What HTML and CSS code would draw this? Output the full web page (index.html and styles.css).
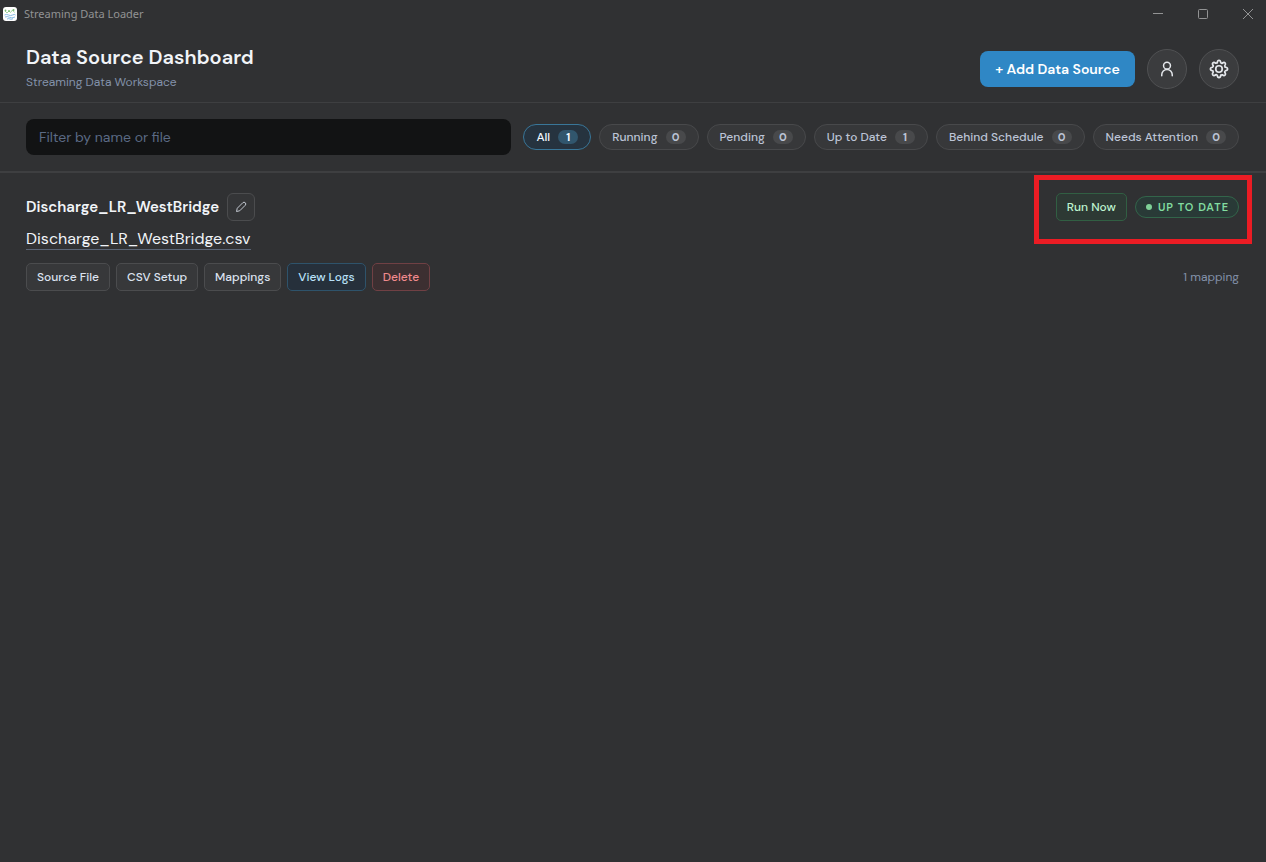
FILE: index.html
```html
<!DOCTYPE html>
<html lang="en">
<head>
<meta charset="utf-8">
<meta name="viewport" content="width=device-width, initial-scale=1">
<title>Streaming Data Loader</title>
<link rel="stylesheet" href="styles.css">
</head>
<body>
<div class="titlebar">
  <svg class="app-logo" viewBox="0 0 14 14" aria-hidden="true">
    <rect width="14" height="14" rx="3" fill="#fff"/>
    <path d="M2 4l2 2 2-2 1.500 1.500 2-2.500 2 2.500" fill="none" stroke="#8fcb8d" stroke-width=".8"/>
    <g fill="#77bd76"><circle cx="2.500" cy="3.500" r=".9"/><circle cx="6" cy="4" r=".9"/><circle cx="10.500" cy="3" r="1"/></g>
    <path d="M1.500 8q2-1.200 4 0t4 0 3 0M2 10q2.500-1 4.500.3t5.500-.3M4 12q2-.8 3 0t3-.3" fill="none" stroke="#7ab4e2" stroke-width=".9"/>
  </svg>
  <span class="window-name">Streaming Data Loader</span>
  <div class="window-controls">
    <button type="button" aria-label="Minimize"><svg viewBox="0 0 12 12"><path d="M1 5.500h10"/></svg></button>
    <button type="button" aria-label="Maximize"><svg viewBox="0 0 12 12"><rect x="1.500" y="1.500" width="9" height="9" rx="1"/></svg></button>
    <button type="button" aria-label="Close"><svg viewBox="0 0 12 12"><path d="M1 1l10 10M11 1L1 11"/></svg></button>
  </div>
</div>

<header class="page-header">
  <div>
    <h1>Data Source Dashboard</h1>
    <p class="workspace">Streaming Data Workspace</p>
  </div>
  <div class="header-actions">
    <button type="button" class="add-button">+ Add Data Source</button>
    <button type="button" class="round-button" aria-label="Account">
      <svg viewBox="0 0 24 24"><circle cx="12" cy="7.500" r="4.600"/><path d="M5 21v-1.500a7 7 0 0 1 14 0V21"/></svg>
    </button>
    <button type="button" class="round-button" aria-label="Settings">
      <svg viewBox="-12 -12 24 24">
        <defs><path id="tooth" d="M-2.100-7.700Q-1.800-10.300 0-10.300T2.100-7.700Q3.200-6.500 3.960-6.930"/></defs>
        <use href="#tooth"/><use href="#tooth" transform="rotate(45)"/><use href="#tooth" transform="rotate(90)"/><use href="#tooth" transform="rotate(135)"/><use href="#tooth" transform="rotate(180)"/><use href="#tooth" transform="rotate(225)"/><use href="#tooth" transform="rotate(270)"/><use href="#tooth" transform="rotate(315)"/>
        <circle r="3.900"/>
      </svg>
    </button>
  </div>
</header>

<section class="filters" aria-label="Filters">
  <input class="search" type="text" placeholder="Filter by name or file" aria-label="Filter by name or file">
  <div class="pills">
    <button type="button" class="pill pill-active">All <span class="count">1</span></button>
    <button type="button" class="pill">Running <span class="count">0</span></button>
    <button type="button" class="pill">Pending <span class="count">0</span></button>
    <button type="button" class="pill">Up to Date <span class="count">1</span></button>
    <button type="button" class="pill">Behind Schedule <span class="count">0</span></button>
    <button type="button" class="pill">Needs Attention <span class="count">0</span></button>
  </div>
</section>

<main>
  <article class="source">
    <div class="source-line">
      <div class="source-title">
        <h2>Discharge_LR_WestBridge</h2>
        <button type="button" class="edit-button" aria-label="Rename">
          <svg viewBox="0 0 24 24"><path d="M3 21l1.500-6.500L15.500 3.500a3.500 3.500 0 0 1 5 5L9.500 19.500z"/></svg>
        </button>
      </div>
      <div class="source-status">
        <button type="button" class="button button-run">Run Now</button>
        <span class="status">UP TO DATE</span>
        <span class="highlight"></span>
      </div>
    </div>
    <div class="file"><a href="#file">Discharge_LR_WestBridge.csv</a></div>
    <div class="source-line">
      <div class="actions">
        <button type="button" class="button">Source File</button>
        <button type="button" class="button">CSV Setup</button>
        <button type="button" class="button">Mappings</button>
        <button type="button" class="button button-logs">View Logs</button>
        <button type="button" class="button button-delete">Delete</button>
      </div>
      <span class="mapping-count">1 mapping</span>
    </div>
  </article>
</main>
</body>
</html>
```

FILE: styles.css
```css
* { box-sizing: border-box; }
body {
  margin: 0;
  min-height: 100vh;
  background: #303133;
  color: #f1f4f8;
  font-family: "DM Sans", Inter, sans-serif;
  font-size: 12px;
}
h1, h2, p { margin: 0; }
button, input { font: inherit; color: inherit; margin: 0; }
button { white-space: nowrap; cursor: pointer; }
svg { display: block; fill: none; stroke: currentColor; }

.titlebar { display: flex; align-items: center; height: 27px; padding-left: 3px; color: #929394; }
.app-logo { width: 14px; height: 14px; margin-right: 7px; stroke: none; }
.window-name { font-family: "Segoe UI", "Noto Sans", sans-serif; font-size: 11px; }
.window-controls { display: flex; margin-left: auto; }
.window-controls button { display: grid; place-items: center; width: 45px; height: 26px; padding: 0 0 0 8px; border: 0; background: none; }
.window-controls svg { width: 12px; height: 12px; }

.page-header { display: flex; align-items: center; justify-content: space-between; height: 76px; padding: 8px 27px 0 26px; border-bottom: 1px solid #3e3f41; }
.page-header h1 { margin-top: -4px; font-size: 20px; line-height: 28px; font-weight: 600; }
.workspace { margin-top: 2px; line-height: 18px; color: #8391aa; }
.header-actions { display: flex; align-items: center; gap: 12px; }
.add-button { width: 155px; height: 36px; padding: 0; border: 0; border-radius: 8px; background: #2f87c5; color: #fff; font-size: 14px; font-weight: 600; }
.round-button { display: grid; place-items: center; width: 40px; height: 40px; padding: 0; border: 1px solid #505153; border-radius: 50%; background: #3b3c3e; color: #e4e7eb; }
.round-button svg { width: 20px; height: 20px; stroke-width: 2; stroke-linecap: round; stroke-linejoin: round; }
.round-button:nth-child(2) svg { width: 18px; }

.filters { display: flex; align-items: center; gap: 12px; padding: 16px 27px 16px 26px; border-bottom: 2px solid #3e3f41; }
.search { flex: 1; min-width: 0; height: 36px; padding: 0 13px; border: 0; border-radius: 8px; background: #121314; font-size: 14px; }
.search::placeholder { color: #5b6a84; opacity: 1; }
.pills { display: flex; gap: 8px; }
.pill { display: flex; align-items: center; gap: 8px; height: 26px; padding: 0 12px; border: 1px solid #48494b; border-radius: 13px; background: #37383a; color: #bcc4d6; font-weight: 500; }
.count { display: grid; place-items: center; width: 20px; height: 14px; border-radius: 7px; background: #48494b; font-size: 11px; font-weight: 700; }
.pill-active { border-color: #397698; background: #26333f; color: #f1f8ff; }
.pill-active .count { background: #31566d; }

.source { padding: 20px 27px 20px 26px; }
.source-line, .source-title, .source-status, .actions { display: flex; align-items: center; }
.source-line { justify-content: space-between; }
.source-title { gap: 8px; }
.source-title h2 { font-size: 15px; line-height: 20px; font-weight: 600; }
.source-status { position: relative; gap: 8px; }
.edit-button { display: grid; place-items: center; width: 28px; height: 28px; padding: 0; border: 1px solid #4b4c4e; border-radius: 6px; background: #343537; color: #c3c8d1; }
.edit-button svg { width: 12px; height: 12px; stroke-width: 2; stroke-linejoin: round; }
.button { height: 28px; padding: 0 10px; border: 1px solid #4b4c4e; border-radius: 5px; background: #37383a; color: #dce2ef; font-weight: 500; }
.button-run { border-color: #315f43; background: #2d3934; color: #bdf3cf; }
.button-logs { border-color: #2e536b; background: #26303b; color: #b9e0f8; }
.button-delete { border-color: #704044; background: #3c2f31; color: #f08a8d; }
.status { display: flex; align-items: center; gap: 6px; height: 22px; padding: 0 9px 0 10px; border: 1px solid #32654a; border-radius: 11px; background: #293a37; color: #82dda0; font-size: 11px; font-weight: 600; letter-spacing: 1px; white-space: nowrap; }
.status::before { content: ""; width: 6px; height: 6px; border-radius: 50%; background: #7fd197; }
.highlight { position: absolute; inset: -18px -13px -23px -22px; border: 5px solid #eb1c24; pointer-events: none; }
.file { margin: 8px 0 14px; font-size: 16px; line-height: 20px; }
.file a { color: #f1f4f8; text-decoration: none; border-bottom: 1px solid #5b6576; }
.actions { gap: 6px; }
.mapping-count { color: #8391aa; }
```
